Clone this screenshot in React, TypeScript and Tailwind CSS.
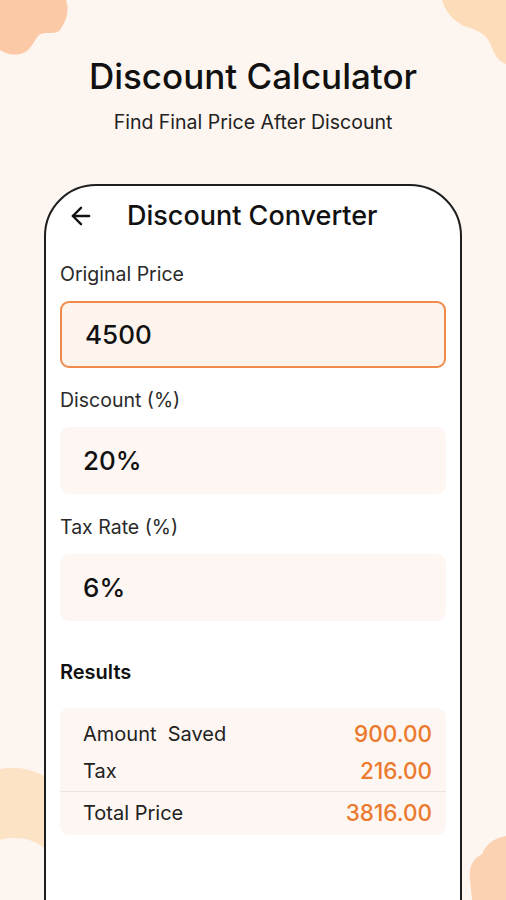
import React from "react";
import { ArrowLeft } from "lucide-react";

function Field({ label, value, active, mt }: { label: string; value: string; active?: boolean; mt: string }) {
  return (
    <div className={mt}>
      <div className="text-[19.5px] leading-[24px] text-[#2a2a2a]">{label}</div>
      <div
        className={
          "mt-[15px] h-[67px] rounded-[9px] flex items-center pl-[23px] text-[26px] font-medium text-[#111] " +
          (active ? "border-2 border-[#ef8a4a] bg-[#fdf4ee]" : "bg-[#fdf6f2]")
        }
      >
        {value}
      </div>
    </div>
  );
}

export default function App() {
  return (
    <div
      className="relative w-[506px] h-[900px] overflow-hidden bg-[#fdf6f0]"
      style={{ fontFamily: "Inter, 'Noto Sans', sans-serif" }}
    >
      {/* decorative blobs */}
      <svg className="absolute left-0 top-0" width="70" height="60" viewBox="0 0 70 60">
        <path d="M0 0 H66 C70 10 66 22 60 30 C54 36 44 30 38 36 C32 44 30 52 20 54 C10 56 4 52 0 50 Z" fill="#fbc9a6" />
      </svg>
      <svg className="absolute right-0 top-0" width="64" height="66" viewBox="0 0 64 66">
        <path d="M64 0 H0 C4 14 14 24 28 28 C40 32 46 36 50 48 C54 58 58 62 64 64 Z" fill="#fddcba" />
      </svg>
      <svg className="absolute left-0 top-[764px]" width="46" height="90" viewBox="0 0 46 90">
        <path d="M0 5 C14 2 30 4 44 12 L44 84 C32 74 16 72 0 76 Z" fill="#fde3c6" />
      </svg>
      <svg className="absolute right-0 top-[836px]" width="42" height="64" viewBox="0 0 42 64">
        <path d="M42 0 C30 2 22 8 18 18 C10 22 4 30 6 44 L8 64 H42 Z" fill="#fcd2b2" />
      </svg>

      <div className="relative flex flex-col items-center">
        <h1 className="mt-[56px] text-[35px] leading-[40px] font-medium text-[#111]">
          Discount Calculator
        </h1>
        <p className="mt-[14px] text-[19.5px] leading-[24px] text-[#222]">Find Final Price After Discount</p>

        <div className="mt-[50px] w-[418px] h-[720px] bg-white border-2 border-[#1e1e1e] rounded-t-[52px] px-[14px]">
          <div className="h-[60px] flex items-center">
            <ArrowLeft size={28} strokeWidth={2} className="ml-[7px] text-[#111]" />
            <span className="ml-[32px] text-[27px] font-medium text-[#111]">Discount Converter</span>
          </div>

          <Field label="Original Price" value="4500" active mt="mt-[16px]" />
          <Field label="Discount (%)" value="20%" mt="mt-[20px]" />
          <Field label="Tax Rate (%)" value="6%" mt="mt-[21px]" />

          <div className="mt-[39px] text-[20px] leading-[24px] font-semibold text-[#111]">Results</div>
          <div className="mt-[24px] rounded-[9px] bg-[#fdf6f2] pl-[23px] pr-[14px] pt-[13px] pb-[9px] text-[20px]">
            <div className="flex justify-between items-center h-[26px]">
              <span className="text-[#222] whitespace-pre">Amount  Saved</span>
              <span className="text-[#ec7a2e] font-medium text-[22.5px]">900.00</span>
            </div>
            <div className="flex justify-between items-center h-[26px] mt-[11px]">
              <span className="text-[#222]">Tax</span>
              <span className="text-[#ec7a2e] font-medium text-[22.5px]">216.00</span>
            </div>
            <div className="h-px bg-[#ece4de] -ml-[23px] -mr-[14px] mt-[7px]" />
            <div className="flex justify-between items-center h-[26px] mt-[8px]">
              <span className="text-[#222]">Total Price</span>
              <span className="text-[#ec7a2e] font-medium text-[22.5px]">3816.00</span>
            </div>
          </div>
        </div>
      </div>
    </div>
  );
}
